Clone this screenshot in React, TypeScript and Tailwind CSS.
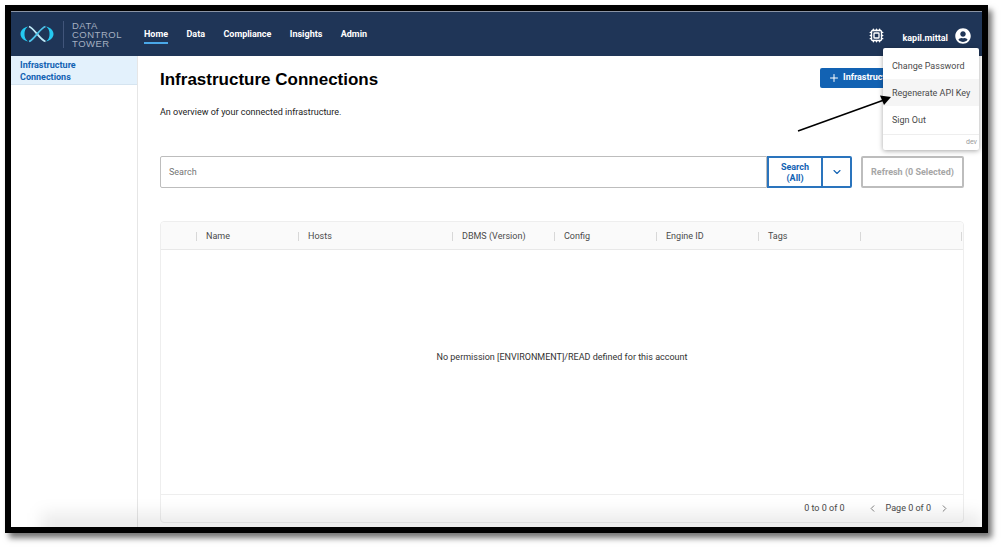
import { ChevronDown, ChevronLeft, ChevronRight, Cpu, Plus } from "lucide-react";
import { FaUserCircle } from "react-icons/fa";

const NAV_ITEMS = ["Home", "Data", "Compliance", "Insights", "Admin"];
const COLUMNS = ["", "Name", "Hosts", "DBMS (Version)", "Config", "Engine ID", "Tags", ""];

const Logo = () => (
  <svg width="34" height="20" viewBox="0 0 34 20" fill="none">
    <path d="M8 2.500C3 3.500 .5 7 .5 10s2.500 6.500 7.500 7.500C5 15.500 4.500 12.500 4.500 10S5 4.500 8 2.500Z" fill="#25c8f0" />
    <path d="M26 2.500c5 1 7.500 4.500 7.500 7.500s-2.500 6.500-7.500 7.500c3-2 3.500-5 3.500-7.500S29 4.500 26 2.500Z" fill="#25c8f0" />
    <path d="M9 2.500c5 1.500 11 13.500 16.500 15" stroke="#bfeaf8" strokeWidth="1.800" />
    <path d="M25.500 2.500C20 4 14 16 9 17.500" stroke="#4fc3ea" strokeWidth="1.800" />
  </svg>
);

const Header = () => (
  <header className="flex h-[45px] shrink-0 items-center border-t border-[#8a94a5] bg-[#1f3557] pl-[9px] pr-[11px]">
    <Logo />
    <div className="ml-[9px] h-[27px] w-px bg-[#41557a]" />
    <div className="ml-[8px] w-[60px] font-['Liberation_Sans',sans-serif] text-[9.500px] leading-[9px] tracking-[0.5px] text-[#a4afc0]">
      <div>DATA</div>
      <div>CONTROL</div>
      <div>TOWER</div>
    </div>
    <nav className="ml-[12px] mt-[3px] flex gap-[18.400px] text-[9px] font-bold text-white">
      {NAV_ITEMS.map((item, i) => (
        <span
          key={item}
          className={i === 0 ? "border-b-2 border-[#4aa8e8] pb-px leading-[13px]" : "pb-[3px] leading-[13px]"}
        >
          {item}
        </span>
      ))}
    </nav>
    <div className="ml-auto mt-[3px] flex items-center">
      <Cpu size={15} strokeWidth={2.2} className="text-white" />
      <span className="ml-[18px] mt-[6px] text-[9px] font-bold text-white">kapil.mittal</span>
      <FaUserCircle size={16} className="ml-[7px] text-white" />
    </div>
  </header>
);

const UserMenu = () => (
  <div className="absolute right-[3px] top-[37px] z-10 w-[96px] rounded-[2px] bg-white text-[9px] text-[#4a4a4a] shadow-[0_1px_5px_rgba(0,0,0,0.35)]">
    <div className="mt-[4px] flex h-[27px] items-center pl-[9px] pt-[2px]">Change Password</div>
    <div className="flex h-[27px] items-center bg-[#f5f5f5] pl-[9px] pt-[2px]">Regenerate API Key</div>
    <div className="flex h-[27px] items-center pl-[9px] pt-[2px]">Sign Out</div>
    <div className="mt-px flex h-[16px] items-center justify-end border-t border-[#eeeeee] pr-[2px] text-[7px] text-[#999999]">
      dev
    </div>
  </div>
);

const Arrow = () => (
  <svg className="absolute left-[786px] top-[84px] z-20" width="100" height="40" viewBox="0 0 100 40" fill="none">
    <path d="M1 36L87 5" stroke="#000000" strokeWidth="1.600" />
    <path d="M94 2L83 .5L87 10Z" fill="#000000" />
  </svg>
);

const ConnectionsTable = () => (
  <div className="mt-[33px] flex h-[302px] flex-col rounded-[4px] border border-[#eeeeee]">
    <div className="grid h-[28px] shrink-0 grid-cols-[35px_102px_154px_102px_102px_102px_102px_102px] items-center rounded-t-[4px] border-b border-[#e8e8e8] bg-[#fafafa] pt-[2px] text-[9px] text-[#4a4a4a]">
      {COLUMNS.map((col, i) => (
        <div
          key={i}
          className={
            i === 0
              ? ""
              : i === 7
                ? "flex h-[9px] items-center border-x border-[#d8d8d8] pl-[9px]"
                : "flex h-[9px] items-center border-l border-[#d8d8d8] pl-[9px]"
          }
        >
          {col}
        </div>
      ))}
    </div>
    <div className="flex flex-1 items-center justify-center pb-[29px] text-[9px] text-[#333333]">
      No permission [ENVIRONMENT]/READ defined for this account
    </div>
    <div className="flex h-[28px] shrink-0 items-center justify-end border-t border-[#eeeeee] pr-[13px] text-[9px] text-[#4a4a4a]">
      <span>0 to 0 of 0</span>
      <ChevronLeft size={11} className="ml-[22px] text-[#777777]" />
      <span className="ml-[8px]">Page 0 of 0</span>
      <ChevronRight size={11} className="ml-[8px] text-[#777777]" />
    </div>
  </div>
);

export default function App() {
  return (
    <div className="h-[547px] w-[1005px] overflow-hidden bg-white font-['Roboto',sans-serif]">
      <div className="ml-[5px] mt-[5px] h-[528px] w-[983px] border-[6px] border-black shadow-[4px_5px_6px_rgba(0,0,0,0.55)]">
        <div className="relative flex h-full flex-col overflow-hidden rounded-bl-[5px] bg-white">
          <Header />
          <UserMenu />
          <Arrow />
          <div className="flex min-h-0 flex-1">
            <aside className="w-[127px] shrink-0 border-r border-[#e6e6e6]">
              <div className="h-[29px] border-b border-[#d5e4f0] bg-[#e3f1fc] pl-[9px] pt-[4px] text-[9px] font-bold leading-[11.500px] text-[#1262b3]">
                Infrastructure
                <br />
                Connections
              </div>
            </aside>
            <main className="min-w-0 flex-1 pl-[22px] pr-[18px] pt-[12px]">
              <div className="flex h-[20px] items-start justify-between">
                <h1 className="mt-px font-['Liberation_Sans',sans-serif] text-[17px] font-bold leading-[22px] text-black">
                  Infrastructure Connections
                </h1>
                <button className="flex h-[20px] w-[144px] items-center rounded-[2px] bg-[#1262b3] pl-[8px] text-[9px] font-bold text-white">
                  <Plus size={12} className="mr-[3px]" />
                  Infrastructure
                </button>
              </div>
              <p className="mt-[18px] text-[9px] leading-[13px] text-[#222222]">
                An overview of your connected infrastructure.
              </p>
              <div className="mt-[37px] flex h-[32px] items-stretch">
                <div className="flex w-[607px] items-center rounded-l-[2px] border border-[#bdbdbd] pl-[8px] pt-[2px] text-[9px] text-[#757575]">
                  Search
                </div>
                <button className="w-[56px] border-2 border-[#2a74bd] pt-[2px] text-center text-[9px] font-bold leading-[11.500px] text-[#1262b3]">
                  Search
                  <br />
                  (All)
                </button>
                <button className="ml-[-2px] flex w-[31px] items-center justify-center rounded-r-[2px] border-2 border-[#2a74bd] text-[#1262b3]">
                  <ChevronDown size={12} strokeWidth={2.2} />
                </button>
                <button className="ml-[9px] w-[103px] rounded-[2px] border-2 border-[#bdbdbd] pt-[2px] text-[9px] font-bold text-[#a6a6a6]">
                  Refresh (0 Selected)
                </button>
              </div>
              <ConnectionsTable />
            </main>
          </div>
          <div className="pointer-events-none absolute -bottom-[12px] left-[30px] right-0 z-10 h-[26px] bg-[#00000014] blur-[8px]" />
        </div>
      </div>
    </div>
  );
}
